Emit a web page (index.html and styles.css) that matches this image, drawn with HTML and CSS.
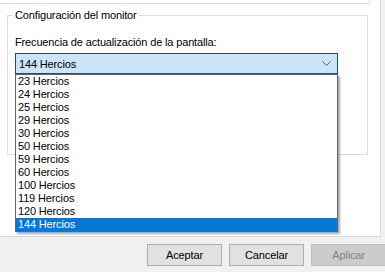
FILE: index.html
```html
<!DOCTYPE html>
<html lang="es">
<head>
<meta charset="UTF-8">
<title>Configuración del monitor</title>
<link rel="stylesheet" href="styles.css">
</head>
<body>

<div class="panel">
    <div class="prev-group"></div>

    <fieldset class="group">
        <legend>Configuración del monitor</legend>
        <div class="group-body">
            <div class="field-label">Frecuencia de actualización de la pantalla:</div>
            <div class="combo">
                <div class="combo-box">
                    <span>144 Hercios</span>
                    <svg class="chevron" width="9" height="5" viewBox="0 0 9 5">
                        <path d="M0.5 0.5 L4.5 4.5 L8.5 0.5" fill="none" stroke="#5a5a5a" stroke-width="1"/>
                    </svg>
                </div>
                <ul class="combo-list">
                    <li>23 Hercios</li>
                    <li>24 Hercios</li>
                    <li>25 Hercios</li>
                    <li>29 Hercios</li>
                    <li>30 Hercios</li>
                    <li>50 Hercios</li>
                    <li>59 Hercios</li>
                    <li>60 Hercios</li>
                    <li>100 Hercios</li>
                    <li>119 Hercios</li>
                    <li>120 Hercios</li>
                    <li class="selected">144 Hercios</li>
                </ul>
            </div>
        </div>
    </fieldset>
</div>

<div class="buttons">
    <button>Aceptar</button>
    <button>Cancelar</button>
    <button disabled>Aplicar</button>
</div>

</body>
</html>
```

FILE: styles.css
```css
body {
    margin: 0;
    padding: 0;
    width: 385px;
    height: 272px;
    overflow: hidden;
    background-color: #f0f0f0;
    font-family: "Liberation Sans", Arial, sans-serif;
    font-size: 11px;
    letter-spacing: -0.15px;
    color: #000;
}

.panel {
    width: 380px;
    height: 236px;
    background-color: #fff;
    border-right: 1px solid #dadada;
    border-bottom: 1px solid #dadada;
}

.prev-group {
    width: 369px;
    height: 3px;
    border-right: 1px solid #dcdcdc;
    border-bottom: 1px solid #dcdcdc;
}

.group {
    margin: 3px 0 0 7px;
    padding: 0;
    width: 361px;
    height: 148px;
    border: 1px solid #dcdcdc;
    box-sizing: border-box;
}

.group legend {
    margin-left: 5px;
    padding: 0 2px;
    line-height: 17px;
}

.group-body {
    padding: 10px 0 0 7px;
}

.field-label {
    line-height: 16px;
}

.combo {
    position: relative;
    margin-top: 3px;
    width: 323px;
}

.combo-box {
    display: flex;
    align-items: center;
    justify-content: space-between;
    height: 21px;
    padding: 0 6px 0 3px;
    background-color: #cce4f7;
    border: 1px solid #005499;
    box-sizing: border-box;
}

.chevron {
    display: block;
}

.combo-list {
    position: absolute;
    top: 21px;
    left: 0;
    width: 323px;
    margin: 0;
    padding: 0;
    list-style: none;
    background-color: #fff;
    border: 1px solid #646464;
    box-sizing: border-box;
    box-shadow: 2px 2px 2px rgba(0, 0, 0, 0.35);
    z-index: 2;
}

.combo-list li {
    height: 13px;
    line-height: 13px;
    padding-left: 2px;
}

.combo-list li.selected {
    background-color: #0078d7;
    color: #fff;
}

.buttons {
    display: flex;
    gap: 7px;
    padding: 7px 0 0 147px;
}

.buttons button {
    flex: none;
    width: 75px;
    height: 22px;
    padding: 0;
    font-family: "Liberation Sans", Arial, sans-serif;
    font-size: 11px;
    letter-spacing: -0.15px;
    color: #000;
    background-color: #e1e1e1;
    border: 1px solid #adadad;
}

.buttons button:disabled {
    color: #838383;
    background-color: #cccccc;
    border-color: #bfbfbf;
}
```
